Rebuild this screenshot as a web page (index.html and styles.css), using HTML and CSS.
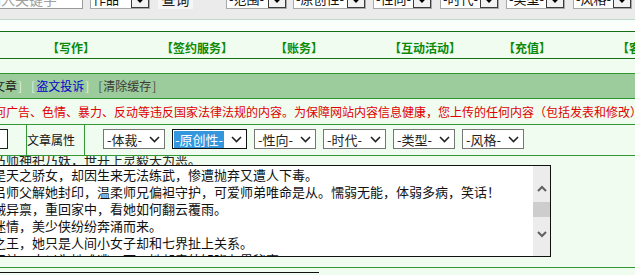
FILE: index.html
```html
<!DOCTYPE html>
<html lang="zh-CN">

<head>
    <meta charset="UTF-8">
    <title>发表文章</title>
    <link rel="stylesheet" href="styles.css">
</head>

<body>
    <!-- search toolbar, top half cut off by the viewport -->
    <div class="topbar">
        <div class="kw">输入关键字</div>
        <div class="tsel w-zp"><span>作品</span><i class="tarr"><svg width="10" height="7" viewBox="0 0 10 7"><path d="M1 1.2 L5 5.4 L9 1.2" fill="none" stroke="#000" stroke-width="2.2"/></svg></i></div>
        <div class="tbtn">查询</div>
        <div class="tsel w-fw"><span>-范围-</span><i class="tarr"><svg width="10" height="7" viewBox="0 0 10 7"><path d="M1 1.2 L5 5.4 L9 1.2" fill="none" stroke="#000" stroke-width="2.2"/></svg></i></div>
        <div class="tsel w-yc"><span>-原创性-</span><i class="tarr"><svg width="10" height="7" viewBox="0 0 10 7"><path d="M1 1.2 L5 5.4 L9 1.2" fill="none" stroke="#000" stroke-width="2.2"/></svg></i></div>
        <div class="tsel w-xx"><span>-性向-</span><i class="tarr"><svg width="10" height="7" viewBox="0 0 10 7"><path d="M1 1.2 L5 5.4 L9 1.2" fill="none" stroke="#000" stroke-width="2.2"/></svg></i></div>
        <div class="tsel w-sd"><span>-时代-</span><i class="tarr"><svg width="10" height="7" viewBox="0 0 10 7"><path d="M1 1.2 L5 5.4 L9 1.2" fill="none" stroke="#000" stroke-width="2.2"/></svg></i></div>
        <div class="tsel w-lx"><span>-类型-</span><i class="tarr"><svg width="10" height="7" viewBox="0 0 10 7"><path d="M1 1.2 L5 5.4 L9 1.2" fill="none" stroke="#000" stroke-width="2.2"/></svg></i></div>
        <div class="tsel w-fg"><span>-风格-</span><i class="tarr"><svg width="10" height="7" viewBox="0 0 10 7"><path d="M1 1.2 L5 5.4 L9 1.2" fill="none" stroke="#000" stroke-width="2.2"/></svg></i></div>
    </div>
    <div class="band"></div>

    <div class="nav">
        <a>【写作】</a>
        <a>【签约服务】</a>
        <a>【账务】</a>
        <a>【互动活动】</a>
        <a>【充值】</a>
        <a>【客服】</a>
    </div>

    <div class="gap"></div>

    <div class="links">
        <span class="dark">文章</span><span class="br">]</span>
        <span class="br lead">[</span><a class="blue">盗文投诉</a><span class="br">]</span>
        <span class="br2 lead">[</span><a class="gray">清除缓存</a><span class="br2">]</span>
    </div>

    <div class="notice">何广告、色情、暴力、反动等违反国家法律法规的内容。为保障网站内容信息健康，您上传的任何内容（包括发表和修改）</div>

    <div class="attrs">
        <div class="cell c1"><div class="ibox"></div></div>
        <div class="cell c2">文章属性</div>
        <div class="cell c3">
            <div class="sel w-tc"><span>-体裁-</span><svg width="11" height="7" viewBox="0 0 11 7"><path d="M1 1 L5.5 5.5 L10 1" fill="none" stroke="#222" stroke-width="1.6"/></svg></div>
            <div class="sel w-yc2 on"><span class="hl">-原创性-</span><svg width="11" height="7" viewBox="0 0 11 7"><path d="M1 1 L5.5 5.5 L10 1" fill="none" stroke="#222" stroke-width="1.6"/></svg></div>
            <div class="sel w-tc"><span>-性向-</span><svg width="11" height="7" viewBox="0 0 11 7"><path d="M1 1 L5.5 5.5 L10 1" fill="none" stroke="#222" stroke-width="1.6"/></svg></div>
            <div class="sel w-sd2"><span>-时代-</span><svg width="11" height="7" viewBox="0 0 11 7"><path d="M1 1 L5.5 5.5 L10 1" fill="none" stroke="#222" stroke-width="1.6"/></svg></div>
            <div class="sel w-tc"><span>-类型-</span><svg width="11" height="7" viewBox="0 0 11 7"><path d="M1 1 L5.5 5.5 L10 1" fill="none" stroke="#222" stroke-width="1.6"/></svg></div>
            <div class="sel w-tc"><span>-风格-</span><svg width="11" height="7" viewBox="0 0 11 7"><path d="M1 1 L5.5 5.5 L10 1" fill="none" stroke="#222" stroke-width="1.6"/></svg></div>
        </div>
    </div>

    <!-- last line of the scrolled intro, only its lower edge shows -->
    <div class="ghost"><p>乃师神祀乃妖，世开上灵毅天为恶。</p></div>

    <div class="editor">
        <div class="txt">
            <p>是天之骄女，却因生来无法练武，惨遭抛弃又遭人下毒。</p>
            <p>吕师父解她封印，温柔师兄偏袒守护，可爱师弟唯命是从。懦弱无能，体弱多病，笑话！</p>
            <p>贼异禀，重回家中，看她如何翻云覆雨。</p>
            <p>迷情，美少侠纷纷奔涌而来。</p>
            <p>之王，她只是人间小女子却和七界扯上关系。</p>
            <p>王神，本以为她难逃一死，她却意外知晓七界秘密。</p>
        </div>
        <div class="sb">
            <svg class="up" width="10" height="8" viewBox="0 0 10 8"><path d="M1 6 L5 2 L9 6" fill="none" stroke="#606060" stroke-width="2"/></svg>
            <div class="thumb"></div>
            <svg class="down" width="10" height="8" viewBox="0 0 10 8"><path d="M1 2 L5 6 L9 2" fill="none" stroke="#606060" stroke-width="2"/></svg>
        </div>
    </div>

    <div class="gap2"></div>
    <div class="next"></div>
</body>

</html>
```

FILE: styles.css
```css
body {
    margin: 0;
    width: 635px;
    height: 275px;
    overflow: hidden;
    background: #f0fcf0;
    font-family: "Noto Sans CJK SC", sans-serif;
    font-size: 12px;
    color: #222;
}

p {
    margin: 0;
}

/* top search bar */
.topbar {
    height: 19px;
    background: #ebebeb;
    border-bottom: 1px solid #bcd9c9;
    display: flex;
    align-items: flex-end;
    overflow: hidden;
}

.topbar > div {
    flex: none;
    height: 20px;
    box-sizing: border-box;
    margin-bottom: 10px;
}

.kw {
    width: 103px;
    margin-left: -20px;
    border: 1px solid #9a9a9a;
    background: #fff;
    color: #a0a0a0;
    font-size: 14px;
    line-height: 18px;
    padding-left: 6px;
}

.tsel {
    display: flex;
    align-items: center;
    justify-content: space-between;
    background: #fff;
    border: 1px solid #a8a8a8;
    padding: 0 0 0 2px;
    font-size: 13px;
    line-height: 18px;
    color: #111;
}

.tarr {
    width: 18px;
    height: 18px;
    box-sizing: border-box;
    border: 1px solid #3c3c3c;
    background: #f2f2f2;
    display: flex;
    align-items: center;
    justify-content: center;
}

.tbtn {
    width: 35px;
    margin-left: 8px;
    background: #f6f6f6;
    text-align: center;
    font-size: 14px;
    line-height: 20px;
}

.w-zp { width: 60px; margin-left: 7px; }
.w-fw { width: 61px; margin-left: 33px; }
.w-yc { width: 73px; margin-left: 6px; }
.w-xx { width: 59px; margin-left: 7px; }
.w-sd { width: 59px; margin-left: 8px; }
.w-lx { width: 59px; margin-left: 7px; }
.w-fg { width: 59px; margin-left: 8px; }

.band {
    height: 11px;
    background: #fbfffb;
}

/* main menu */
.nav {
    border-top: 1px solid #176e17;
    border-bottom: 1px solid #176e17;
    background: #effcef;
    height: 20px;
    padding: 6px 0 0 47px;
    display: flex;
    line-height: 20px;
    white-space: nowrap;
    overflow: hidden;
}

.nav a {
    flex: none;
    width: 114px;
    color: #0a8a0a;
    font-weight: bold;
}

.gap {
    height: 14px;
}

/* sub links */
.links {
    border-top: 1px solid #2e962e;
    border-bottom: 1px solid #2e962e;
    background: #9ccc9c;
    height: 24px;
    line-height: 24px;
    margin-left: -7px;
    white-space: nowrap;
    display: flex;
}

.links .dark {
    color: #1a1a1a;
}

.links .br {
    color: #e6eee6;
    margin: 0 1px;
}

.links .br2 {
    color: #4a4a4a;
    margin: 0 1px;
}

.links .lead {
    margin-left: 8px;
}

.links .blue {
    color: #0000cc;
}

.links .gray {
    color: #3a3a3a;
}

.notice {
    height: 25px;
    line-height: 25px;
    color: #e00000;
    margin-left: -6px;
    white-space: nowrap;
    overflow: hidden;
}

/* article attributes row */
.attrs {
    border-top: 1px solid #339933;
    border-bottom: 1px solid #339933;
    height: 30px;
    display: flex;
}

.cell {
    flex: none;
    height: 30px;
    box-sizing: border-box;
}

.c1 {
    width: 27px;
    border-right: 1px solid #339933;
    padding-top: 4px;
    overflow: hidden;
}

.ibox {
    width: 28px;
    height: 20px;
    box-sizing: border-box;
    margin-left: -20px;
    border: 1px solid #222;
    background: #fff;
}

.c2 {
    width: 58px;
    border-right: 1px solid #339933;
    line-height: 30px;
    color: #111;
}

.c3 {
    flex: 1;
    display: flex;
    gap: 7px;
    padding: 4px 0 0 18px;
}

.sel {
    height: 20px;
    box-sizing: border-box;
    border: 1px solid #767676;
    background: #fff;
    display: flex;
    align-items: center;
    justify-content: space-between;
    padding: 0 4px 0 3px;
    font-size: 13px;
    color: #222;
}

.sel.on {
    border-color: #111;
    padding-left: 1px;
}

.sel .hl {
    background: #3496dc;
    color: #fff;
    height: 17px;
    line-height: 17px;
    padding: 0 1px;
}

.w-tc { width: 62px; }
.w-yc2 { width: 75px; }
.w-sd2 { width: 63px; }

/* intro text */
.ghost {
    height: 9px;
    overflow: hidden;
    white-space: nowrap;
    font-size: 13px;
    margin-left: -7px;
}

.ghost p {
    margin-top: -5px;
    line-height: 17px;
}

.editor {
    height: 90px;
    width: 557px;
    margin-left: -8px;
    border: 1px solid #111;
    background: #fff;
    display: flex;
}

.txt {
    flex: 1;
    overflow: hidden;
    white-space: nowrap;
    font-size: 13px;
    line-height: 17px;
    color: #111;
}

.sb {
    flex: none;
    width: 17px;
    background: #ececec;
    display: flex;
    flex-direction: column;
    align-items: center;
    padding-top: 19px;
    box-sizing: border-box;
}

.thumb {
    width: 100%;
    height: 15px;
    margin-top: 9px;
    background: #cdcdcd;
}

.down {
    margin-top: 13px;
}

.gap2 {
    height: 10px;
    border-bottom: 1px solid #339933;
    margin-bottom: 4px;
}

.next {
    width: 319px;
    height: 2px;
    border-top: 1px solid #111;
}
```
